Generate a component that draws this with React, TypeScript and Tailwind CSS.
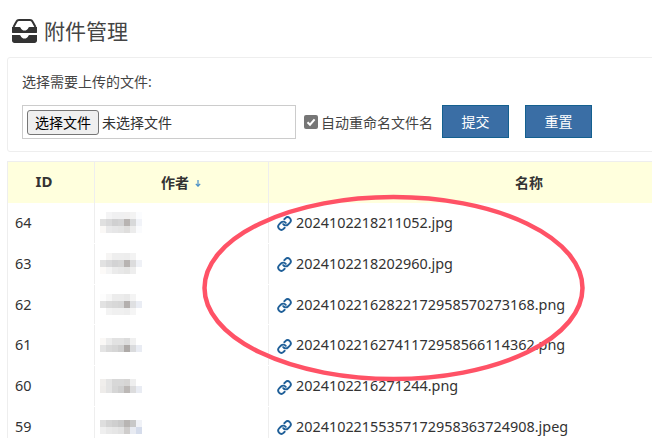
import { Link } from 'lucide-react'

const FONT = { fontFamily: '"Noto Sans", "Noto Sans CJK SC", sans-serif' }

// pixelated author names, one row of greys per mosaic line
const ROWS = [
  {
    id: 64,
    name: '2024102218211052.jpg',
    mosaic: [
      ['#ffffff', '#f4f4f5', '#f0f0f1', '#f0f0f1', '#f1f0f0', '#f3f3f3', '#fbfcfe'],
      ['#e0e0e0', '#d9d9da', '#d0d0d1', '#d3d3d4', '#b8b4b2', '#d8d9da', '#f1f3f8'],
      ['#faf8f6', '#e9e9ea', '#e6e6e7', '#e4e4e4', '#dfdedd', '#ececec', '#fafbfd'],
    ],
  },
  {
    id: 63,
    name: '2024102218202960.jpg',
    mosaic: [
      ['#ffffff', '#f6f5f4', '#eeeeee', '#eeeeee', '#ededed', '#f3f3f3', '#ffffff'],
      ['#e2e2e2', '#dadadb', '#d3d3d4', '#d6d6d6', '#b8b4b2', '#dcdcdd', '#eff1f6'],
      ['#fcfaf8', '#f4f4f4', '#ebebeb', '#e8e8e8', '#e5e5e4', '#eeeeee', '#ffffff'],
    ],
  },
  {
    id: 62,
    name: '20241022162822172958570273168.png',
    mosaic: [
      ['#fdfdfd', '#f6f6f6', '#ececec', '#ececec', '#e9e9e9', '#f4f4f4', '#ffffff'],
      ['#e2e2e2', '#dbdbdb', '#d8d8d8', '#d6d6d6', '#b4b0ae', '#dfe0e2', '#eaedf4'],
      ['#ffffff', '#f3f3f3', '#f0f0f0', '#f0f0f0', '#eeeeee', '#f5f5f5', '#ffffff'],
    ],
  },
  {
    id: 61,
    name: '20241022162741172958566114362.png',
    mosaic: [
      ['#faf8f6', '#ececec', '#e2e2e2', '#e2e2e2', '#dcdcdc', '#f0f0f0', '#ffffff'],
      ['#e4e4e4', '#dadada', '#d6d6d6', '#cfcfcf', '#aeaaa8', '#dadbdd', '#e9ecf3'],
    ],
  },
  {
    id: 60,
    name: '2024102216271244.png',
    mosaic: [
      ['#f0eeec', '#e4e4e4', '#d8d8d8', '#d8d8d8', '#d6d5d4', '#eeeeee', '#ffffff'],
      ['#eeecea', '#e4e4e4', '#d6d6d6', '#cfcfcf', '#bcb8b6', '#dcdcdd', '#e9ecf3'],
    ],
  },
  {
    id: 59,
    name: '20241022155357172958363724908.jpeg',
    mosaic: [
      ['#dedede', '#d4d4d4', '#cfcfcf', '#c9c9c9', '#b8b5b3', '#c8c8c8', '#f0f2f7'],
      ['#efefef', '#e9e9e9', '#e6e6e6', '#e2e2e2', '#cfcdcc', '#e8ebf2', '#d5dceb'],
    ],
  },
]

function Mosaic({ cells }: { cells: string[][] }) {
  return (
    <svg width="42" height={cells.length * 7} className="block" shapeRendering="crispEdges">
      {cells.map((line, y) =>
        line.map((fill, x) => <rect key={`${x}-${y}`} x={x * 6} y={y * 7} width="6" height="7" fill={fill} />),
      )}
    </svg>
  )
}

function InboxIcon() {
  return (
    <svg width="25" height="24" viewBox="0 0 25 24" className="block">
      <path d="M1.500 8 4.500 2.500C5 1.500 5.800 1 7 1h11c1.200 0 2 .5 2.500 1.500L23.500 8" fill="none" stroke="#333" strokeWidth="2" />
      <path
        fill="#333"
        d="M0 8h7.500c.6 0 1 .3 1.200.9.500 1.500 2 2.600 3.800 2.600s3.300-1.100 3.800-2.600c.2-.6.600-.9 1.200-.9H25v5.500c0 .3-.2.500-.5.500H.5c-.3 0-.5-.2-.5-.5z"
      />
      <path
        fill="#333"
        d="M0 16h7.500c.6 0 1 .3 1.200.9.500 1.500 2 2.600 3.800 2.600s3.300-1.100 3.800-2.600c.2-.6.600-.9 1.200-.9H25v5.500c0 1.400-1.100 2.500-2.500 2.500h-20C1.100 24 0 22.900 0 21.500z"
      />
    </svg>
  )
}

export default function App() {
  return (
    <div className="relative h-[438px] w-[652px] overflow-hidden bg-white text-[#333]" style={FONT}>
      <div className="flex h-[57px] items-center gap-[7px] pl-[12px] pt-[5px]">
        <InboxIcon />
        <h1 className="mt-[1px] text-[21px] font-normal text-[#444]">附件管理</h1>
      </div>

      <div className="ml-[7px] h-[95px] w-[680px] rounded-[3px] border border-[#eeeeee] pl-[14px] pt-[14px]">
        <p className="text-[14px] leading-[20px] text-[#444]">选择需要上传的文件:</p>
        <div className="mt-[13px] flex items-start">
          <div className="flex h-[34px] w-[274px] shrink-0 items-center border border-[#cccccc] pl-[4px] text-[14px]">
            <button className="h-[25px] w-[72px] rounded-[3px] border border-[#767676] bg-[#efefef] text-[14px] text-black">
              选择文件
            </button>
            <span className="ml-[3px] text-[#333]">未选择文件</span>
          </div>
          <label className="ml-[8px] flex h-[34px] shrink-0 items-center gap-[3px] text-[14px] text-[#444]">
            <span className="flex h-[14px] w-[14px] items-center justify-center rounded-[2px] bg-[#767676]">
              <svg width="10" height="10" viewBox="0 0 10 10">
                <path d="M1.500 5.200 4 7.700 8.600 2.300" fill="none" stroke="#fff" strokeWidth="2" />
              </svg>
            </span>
            自动重命名文件名
          </label>
          <button className="ml-[9px] h-[33px] w-[67px] shrink-0 border border-[#14608f] bg-[#3a6ea5] text-[14px] text-white">提交</button>
          <button className="ml-[16px] h-[33px] w-[67px] shrink-0 border border-[#14608f] bg-[#3a6ea5] text-[14px] text-white">重置</button>
        </div>
      </div>

      <div className="ml-[7px] mt-[9px] w-[783px] border-l border-[#eeeeee]">
        <div className="flex h-[42px] items-center border-t border-[#eeeeee] bg-[#ffffdd] text-[14px] font-bold text-[#333]">
          <div className="flex h-full w-[87px] shrink-0 items-center justify-center border-r border-[#eeeeee] pb-[2px] pr-[14px] text-[15px]">ID</div>
          <div className="flex h-full w-[174px] shrink-0 items-center justify-center gap-[6px] border-r border-[#eeeeee] pb-[1px] pr-[1px]">
            作者
            <svg width="6" height="7" viewBox="0 0 6 7" className="mt-[2px]">
              <path d="M3 0v6M.8 3.800 3 6.200l2.200-2.400" fill="none" stroke="#4a90c8" strokeWidth="1.200" />
            </svg>
          </div>
          <div className="flex h-full w-[522px] shrink-0 items-center justify-center pb-[1px] pr-[2px]">名称</div>
        </div>
        {ROWS.map((row) => (
          <div key={row.id} className="flex h-[40.800px] items-center pb-[1px] text-[14.400px] text-[#333]">
            <div className="flex h-full w-[87px] shrink-0 items-center border-r border-[#eeeeee] pl-[7px]">{row.id}</div>
            <div className="flex h-full w-[174px] shrink-0 items-center border-r border-[#eeeeee] pl-[5px]">
              <Mosaic cells={row.mosaic} />
            </div>
            <div className="flex h-full items-center gap-[4px] pl-[8px]">
              <Link className="mt-[2px] h-[15px] w-[15px] text-[#1f5f98]" strokeWidth={3} />
              <span>{row.name}</span>
            </div>
          </div>
        ))}
      </div>

      {/* hand-drawn annotation over the table */}
      <svg width="652" height="438" className="pointer-events-none absolute left-0 top-0">
        <ellipse cx="393.500" cy="288" rx="189" ry="91" fill="none" stroke="#ff5266" strokeWidth="4.500" />
      </svg>
    </div>
  )
}
